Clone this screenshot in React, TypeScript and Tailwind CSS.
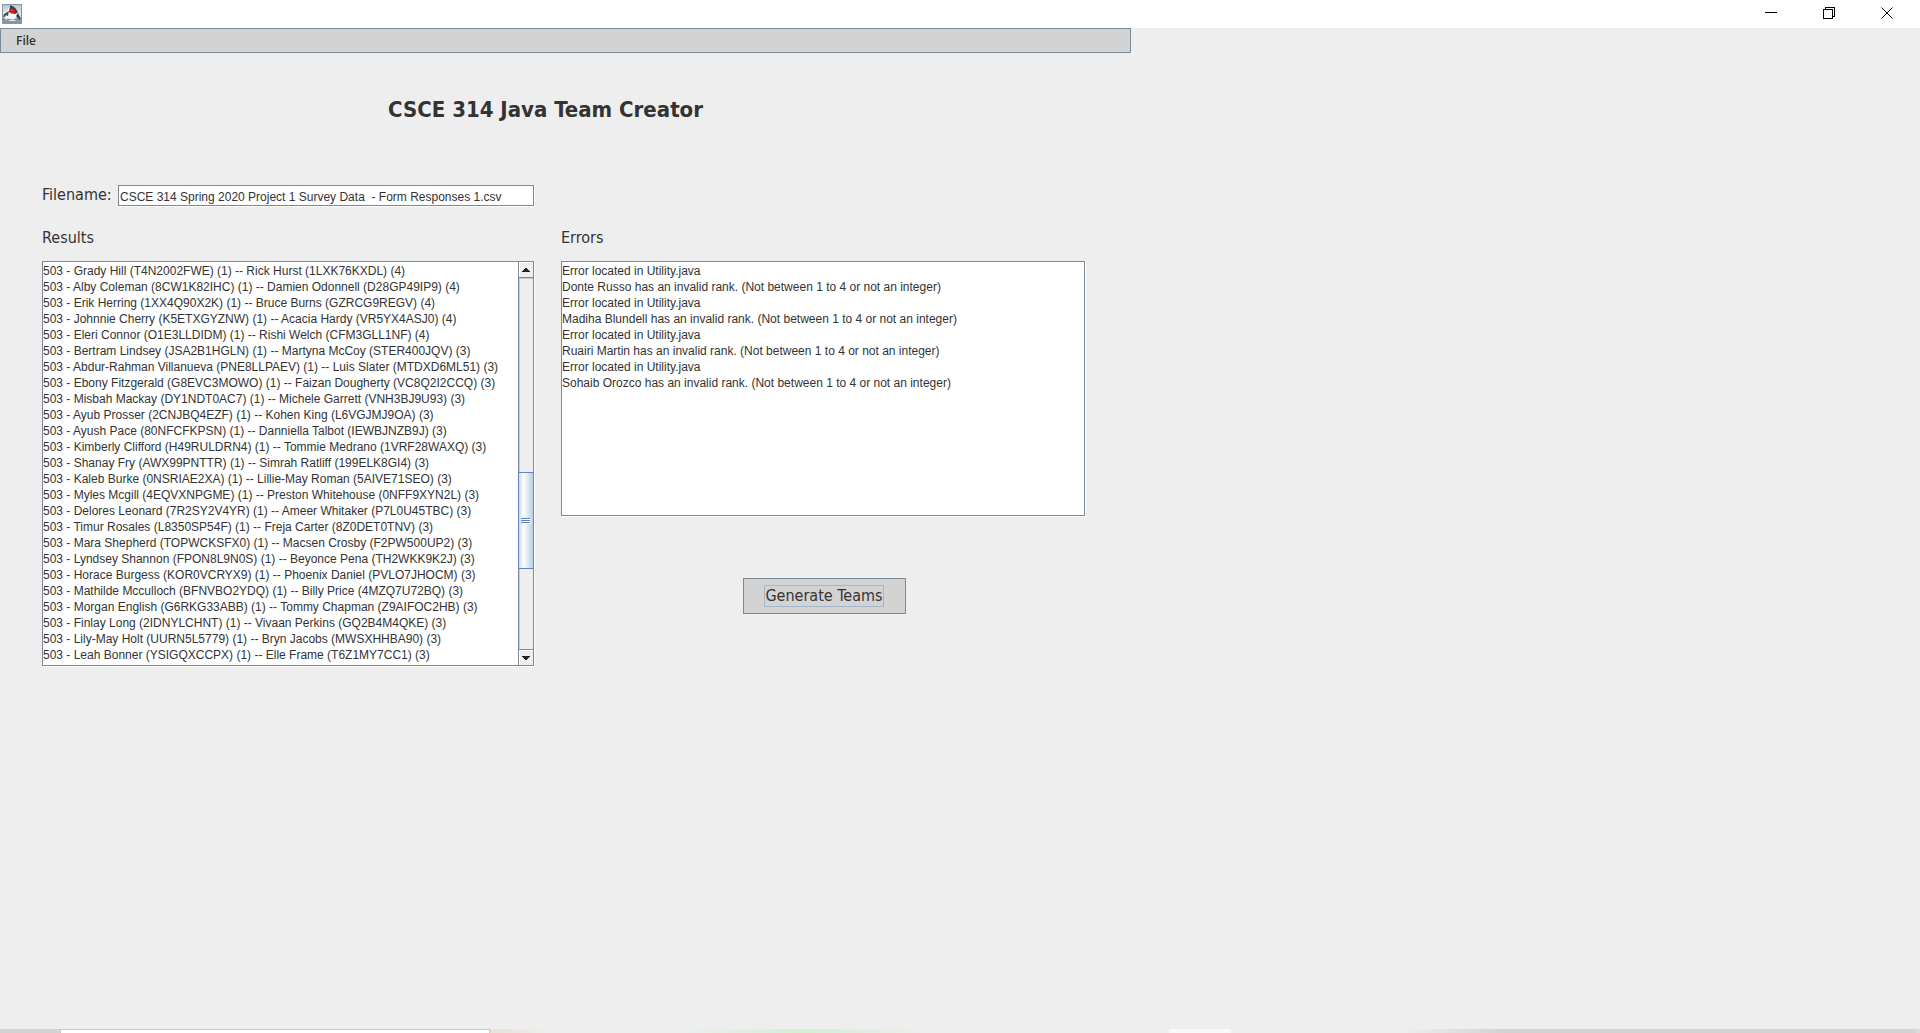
import type { ReactNode } from "react";

const results = [
  "503 - Grady Hill (T4N2002FWE) (1) -- Rick Hurst (1LXK76KXDL) (4)",
  "503 - Alby Coleman (8CW1K82IHC) (1) -- Damien Odonnell (D28GP49IP9) (4)",
  "503 - Erik Herring (1XX4Q90X2K) (1) -- Bruce Burns (GZRCG9REGV) (4)",
  "503 - Johnnie Cherry (K5ETXGYZNW) (1) -- Acacia Hardy (VR5YX4ASJ0) (4)",
  "503 - Eleri Connor (O1E3LLDIDM) (1) -- Rishi Welch (CFM3GLL1NF) (4)",
  "503 - Bertram Lindsey (JSA2B1HGLN) (1) -- Martyna McCoy (STER400JQV) (3)",
  "503 - Abdur-Rahman Villanueva (PNE8LLPAEV) (1) -- Luis Slater (MTDXD6ML51) (3)",
  "503 - Ebony Fitzgerald (G8EVC3MOWO) (1) -- Faizan Dougherty (VC8Q2I2CCQ) (3)",
  "503 - Misbah Mackay (DY1NDT0AC7) (1) -- Michele Garrett (VNH3BJ9U93) (3)",
  "503 - Ayub Prosser (2CNJBQ4EZF) (1) -- Kohen King (L6VGJMJ9OA) (3)",
  "503 - Ayush Pace (80NFCFKPSN) (1) -- Danniella Talbot (IEWBJNZB9J) (3)",
  "503 - Kimberly Clifford (H49RULDRN4) (1) -- Tommie Medrano (1VRF28WAXQ) (3)",
  "503 - Shanay Fry (AWX99PNTTR) (1) -- Simrah Ratliff (199ELK8GI4) (3)",
  "503 - Kaleb Burke (0NSRIAE2XA) (1) -- Lillie-May Roman (5AIVE71SEO) (3)",
  "503 - Myles Mcgill (4EQVXNPGME) (1) -- Preston Whitehouse (0NFF9XYN2L) (3)",
  "503 - Delores Leonard (7R2SY2V4YR) (1) -- Ameer Whitaker (P7L0U45TBC) (3)",
  "503 - Timur Rosales (L8350SP54F) (1) -- Freja Carter (8Z0DET0TNV) (3)",
  "503 - Mara Shepherd (TOPWCKSFX0) (1) -- Macsen Crosby (F2PW500UP2) (3)",
  "503 - Lyndsey Shannon (FPON8L9N0S) (1) -- Beyonce Pena (TH2WKK9K2J) (3)",
  "503 - Horace Burgess (KOR0VCRYX9) (1) -- Phoenix Daniel (PVLO7JHOCM) (3)",
  "503 - Mathilde Mcculloch (BFNVBO2YDQ) (1) -- Billy Price (4MZQ7U72BQ) (3)",
  "503 - Morgan English (G6RKG33ABB) (1) -- Tommy Chapman (Z9AIFOC2HB) (3)",
  "503 - Finlay Long (2IDNYLCHNT) (1) -- Vivaan Perkins (GQ2B4M4QKE) (3)",
  "503 - Lily-May Holt (UURN5L5779) (1) -- Bryn Jacobs (MWSXHHBA90) (3)",
  "503 - Leah Bonner (YSIGQXCCPX) (1) -- Elle Frame (T6Z1MY7CC1) (3)",
];

const errors = ["Donte Russo", "Madiha Blundell", "Ruairi Martin", "Sohaib Orozco"].flatMap((name) => [
  "Error located in Utility.java",
  `${name} has an invalid rank. (Not between 1 to 4 or not an integer)`,
]);

function JavaIcon() {
  return (
    <svg width="20" height="20" viewBox="0 0 20 20" aria-hidden="true">
      <defs>
        <linearGradient id="tile" x1="0" y1="0" x2="0" y2="1">
          <stop offset="0" stopColor="#b4c3d2" />
          <stop offset="0.5" stopColor="#e3eaf0" />
          <stop offset="1" stopColor="#8b9cac" />
        </linearGradient>
      </defs>
      <rect x="0.5" y="0.5" width="19" height="19" fill="url(#tile)" stroke="#8797a8" />
      <path d="M1 14h18v5H1z" fill="#8796a5" />
      <path d="M8 2c3 0 6 2 8 6l2 5-3-1-2 3H7l-3-2c0-4 1-8 4-11z" fill="#f6f6f6" />
      <path d="M8 1.500c3 0 6 2.500 8 7L13 10 7 8z" fill="#3a3f44" />
      <path d="M7 7 2 10l-1 3 5-1z" fill="#4a4f55" />
      <path d="M4 11c-1 2-1 4 0 5l3-3z" fill="#fff" />
      <path d="M14 12l2-3 2.500 5-1 2z" fill="#3a3f45" />
      <path d="M6 17c3-2 6-2 8 0z" fill="#e9edf0" />
      <circle cx="10.500" cy="7" r="2.600" fill="#c81818" />
      <circle cx="10" cy="6.300" r="0.900" fill="#f05a4a" />
    </svg>
  );
}

function WindowButton({ label, children }: { label: string; children: ReactNode }) {
  return (
    <button type="button" aria-label={label} className="flex w-[58px] items-center justify-center">
      <svg width="12" height="12" viewBox="0 0 12 12" fill="none" stroke="#000" shapeRendering="crispEdges">
        {children}
      </svg>
    </button>
  );
}

function ScrollBar() {
  return (
    <div className="flex w-[15px] shrink-0 flex-col border-l border-[#7a8a99] bg-[#eeeeee]">
      <button
        type="button"
        aria-label="Scroll up"
        className="flex h-4 items-center justify-center border-b border-[#7a8a99] shadow-[inset_1px_1px_0_white]"
      >
        <svg width="8" height="4" viewBox="0 0 8 4" shapeRendering="crispEdges">
          <path d="M3 0h2v1h1v1h1v1h1v1H0V3h1V2h1V1h1z" fill="#222" />
        </svg>
      </button>
      <div className="flex grow flex-col border-t border-l border-[#b8cfe5]">
        <div className="grow-[193]" />
        <div className="-ml-[2px] flex h-[97px] flex-col items-center justify-center border border-r-0 border-[#6382bf] bg-linear-to-r from-[#c8dbed] via-white via-30% to-[#b8cfe5]">
          <svg width="10" height="6" viewBox="0 0 10 6" shapeRendering="crispEdges">
            <path d="M1 1h9v1H1zM1 3h9v1H1zM1 5h9v1H1z" fill="#fff" />
            <path d="M0 0h9v1H0zM0 2h9v1H0zM0 4h9v1H0z" fill="#6382bf" />
          </svg>
        </div>
        <div className="grow-[80]" />
      </div>
      <button
        type="button"
        aria-label="Scroll down"
        className="flex h-4 items-center justify-center border-t border-[#7a8a99] shadow-[inset_1px_1px_0_white]"
      >
        <svg width="8" height="4" viewBox="0 0 8 4" shapeRendering="crispEdges">
          <path d="M0 0h8v1H7v1H6v1H5v1H3V3H2V2H1V1H0z" fill="#222" />
        </svg>
      </button>
    </div>
  );
}

export default function App() {
  return (
    <div className="flex min-h-screen flex-col bg-[#eeeeee] font-['DejaVu_Sans_Condensed','DejaVu_Sans',sans-serif] text-base text-[#333333]">
      <header className="flex h-7 items-stretch justify-between bg-white pr-1 pl-[2px]">
        <div className="flex items-center">
          <JavaIcon />
        </div>
        <div className="flex pb-[2px]">
          <WindowButton label="Minimize">
            <path d="M0 5.5h12" />
          </WindowButton>
          <WindowButton label="Restore">
            <path d="M0.500 2.500h9v9h-9zM2.500 2V0.500h9v9H10" />
          </WindowButton>
          <WindowButton label="Close">
            <path d="M0.500 0.500l11 11M11.500 0.500l-11 11" shapeRendering="auto" />
          </WindowButton>
        </div>
      </header>

      <nav className="flex h-[25px] w-full max-w-[1131px] items-center border border-[#7a8a99] bg-[#d3d3d3] px-[15px]">
        <button type="button" className="font-['Open_Sans',sans-serif] text-xs font-semibold">
          File
        </button>
      </nav>

      <main className="w-full max-w-[1131px] pr-[46px] pl-[42px]">
        <h1 className="mt-[43px] pr-9 text-center text-[22px] leading-7 font-bold">CSCE 314 Java Team Creator</h1>

        <div className="mt-[61px] grid grid-cols-[492fr_524fr] gap-x-[27px]">
          <div className="flex h-[21px]">
            <label htmlFor="filename" className="w-[76px] shrink-0 leading-5">
              Filename:
            </label>
            <input
              id="filename"
              type="text"
              defaultValue="CSCE 314 Spring 2020 Project 1 Survey Data  - Form Responses 1.csv"
              className="min-w-0 grow border border-[#7a8a99] bg-white px-px pt-[2px] font-['Liberation_Sans',sans-serif] text-xs shadow-[1px_1px_0_white] outline-none"
            />
          </div>
        </div>

        <div className="mt-5 grid grid-cols-[492fr_524fr] items-start gap-x-[27px]">
          <section className="flex flex-col gap-[11px]">
            <label htmlFor="results" className="leading-6">
              Results
            </label>
            <div className="flex border border-[#7a8a99] bg-white shadow-[1px_1px_0_white]">
              <textarea
                id="results"
                readOnly
                rows={25}
                wrap="off"
                value={results.join("\n")}
                className="box-content min-w-0 grow resize-none overflow-hidden pt-px pb-[2px] font-['Liberation_Sans',sans-serif] text-xs leading-4 outline-none"
              />
              <ScrollBar />
            </div>
          </section>

          <section className="flex flex-col gap-[11px]">
            <label htmlFor="errors" className="leading-6">
              Errors
            </label>
            <textarea
              id="errors"
              readOnly
              wrap="off"
              value={errors.join("\n")}
              className="h-[255px] resize-none overflow-hidden border border-[#7a8a99] bg-white pt-px font-['Liberation_Sans',sans-serif] text-xs leading-4 shadow-[1px_1px_0_white] outline-none"
            />
            <div className="mt-[51px] flex justify-center pl-[2px]">
              <button type="button" className="flex h-9 w-[163px] items-center justify-center border border-[#7a8a99] bg-[#d3d3d3]">
                <span className="border border-[#a3b8cc] leading-5 whitespace-nowrap">Generate Teams</span>
              </button>
            </div>
          </section>
        </div>
      </main>

      <footer className="mt-auto flex h-1 bg-[#eeeeee]">
        <div className="w-[60px] bg-[#d3d3d3]" />
        <div className="w-[430px] border border-b-0 border-[#c8c8c8] bg-white" />
        <div className="w-[60px] bg-linear-to-r from-[#e8e2d6] to-[#eeeeee]" />
        <div className="grow-[130]" />
        <div className="grow-[250] bg-linear-to-r from-[#eeeeee] via-[#d3eed3] via-50% to-[#eeeeee]" />
        <div className="grow-[241]" />
        <div className="w-[62px] bg-[#f8f8f8]" />
        <div className="grow-[687] border-r-4 border-[#dcdcdc] bg-linear-to-r from-[#eeeeee] from-25% to-[#d3d3d3] to-40%" />
      </footer>
    </div>
  );
}
